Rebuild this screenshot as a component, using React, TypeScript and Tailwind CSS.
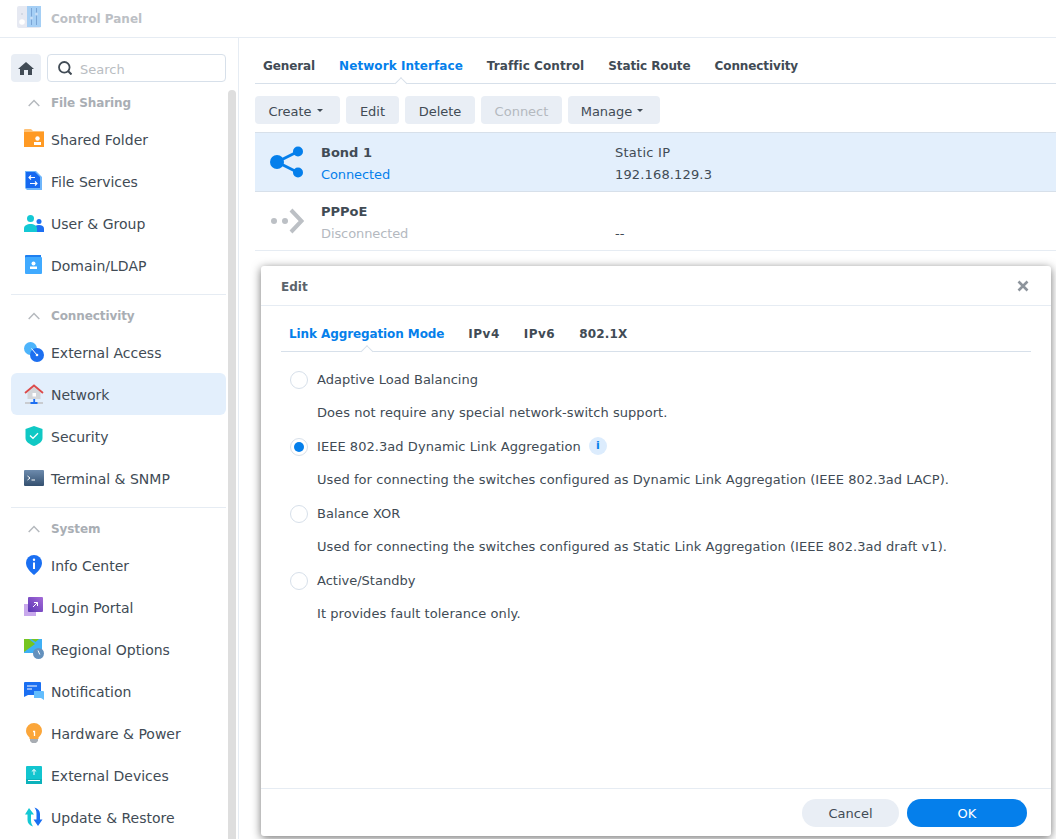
import type { ReactNode } from 'react';

function Ico({ children }: { children: ReactNode }) {
  return (
    <svg viewBox="0 0 20 20" className="w-5 h-5 shrink-0">
      {children}
    </svg>
  );
}

const icons: Record<string, ReactNode> = {
  shared: (
    <Ico>
      <path d="M0 1a1 1 0 0 1 1-1h6l2 2h11v3H0z" fill="#ffc277" />
      <path d="M0 3h20v15H0z" fill="#ff9a24" />
      <circle cx="13.500" cy="9.500" r="2.200" fill="#fff" />
      <rect x="10" y="13" width="7" height="3" fill="#fff" />
    </Ico>
  ),
  files: (
    <Ico>
      <path d="M1 0h11l6 6v13H3l-2-2z" fill="#6fb6fb" />
      <path d="M2 1h9l5 5v11H2z" fill="#1668f0" />
      <path d="M11 6.500H5m2-2-2 2 2 2M6 12.500h7m-2-2 2 2-2 2" stroke="#fff" strokeWidth="1.100" fill="none" />
    </Ico>
  ),
  user: (
    <Ico>
      <circle cx="15" cy="8.500" r="2.500" fill="#1d6ff2" />
      <path d="M10 19v-3.500c0-2 2-3.500 5-3.500s5 1.500 5 3.500V19z" fill="#1d6ff2" />
      <circle cx="6.500" cy="5.500" r="3.500" fill="#14c8d4" />
      <path d="M0 19v-3.500C0 12.500 3 11 6.500 11s6.500 1.500 6.500 4.500V19z" fill="#14c8d4" />
    </Ico>
  ),
  domain: (
    <Ico>
      <path d="M2 0h15v3H1V1a1 1 0 0 1 1-1z" fill="#1f7ff0" />
      <rect x="1" y="2" width="17" height="17" rx="1" fill="#40aaff" />
      <circle cx="9.500" cy="8.500" r="2" fill="#fff" />
      <rect x="6" y="11.500" width="7" height="2.500" fill="#fff" />
    </Ico>
  ),
  external: (
    <Ico>
      <circle cx="6.500" cy="6.500" r="6.500" fill="#4db4fb" />
      <circle cx="13" cy="13" r="7" fill="#1c6ff0" />
      <path d="M7.500 6.500 13 13" stroke="#fff" strokeWidth="1" />
      <circle cx="13" cy="13" r="1.300" fill="#fff" />
    </Ico>
  ),
  network: (
    <Ico>
      <path d="M3.500 8 10 3l6.500 5v7h-13z" fill="#d3d6da" />
      <path d="M1 9 10 1.500 19 9" stroke="#dc4a4a" strokeWidth="1.800" fill="none" />
      <rect x="8.500" y="9" width="3.500" height="3.500" fill="#fff" />
      <rect x="9.300" y="15" width="1.800" height="3" fill="#1d6ff2" />
      <rect x="1" y="18" width="18" height="2" fill="#c9ccd1" />
      <rect x="6.500" y="18" width="7" height="2" fill="#1d6ff2" />
    </Ico>
  ),
  security: (
    <Ico>
      <path d="M10 0l8.500 3v9c0 4-4.500 6.500-8.500 8-4-1.500-8.500-4-8.500-8V3z" fill="#10c8c4" />
      <path d="M6 9.500l3 2.800 5-5" stroke="#fff" strokeWidth="1.300" fill="none" />
    </Ico>
  ),
  terminal: (
    <Ico>
      <defs>
        <linearGradient id="term" x1="0" y1="0" x2="0" y2="1">
          <stop offset="0" stopColor="#6d8bad" />
          <stop offset="1" stopColor="#34506f" />
        </linearGradient>
      </defs>
      <rect x="0" y="2" width="20" height="16" rx="1" fill="url(#term)" />
      <path d="M3.500 8l2.500 2-2.500 2M7.500 12H11" stroke="#fff" strokeWidth="1" fill="none" />
    </Ico>
  ),
  info: (
    <Ico>
      <path d="M10 0a8 8 0 0 1 8 8c0 5-5 9.500-8 12-3-2.500-8-7-8-12a8 8 0 0 1 8-8z" fill="#1a6ff2" />
      <rect x="9" y="7.500" width="2" height="6.500" fill="#fff" />
      <circle cx="10" cy="4.800" r="1.200" fill="#fff" />
    </Ico>
  ),
  login: (
    <Ico>
      <rect x="0" y="7" width="12" height="12" fill="#c8a8ec" />
      <defs>
        <linearGradient id="login" x1="1" y1="0" x2="0" y2="1">
          <stop offset="0" stopColor="#a56bd8" />
          <stop offset="1" stopColor="#5a35b4" />
        </linearGradient>
      </defs>
      <rect x="4" y="0" width="15" height="15" rx="1" fill="url(#login)" />
      <path d="M9 10l4.500-4.500M10 5.500h3.500V9" stroke="#fff" strokeWidth="1" fill="none" />
    </Ico>
  ),
  regional: (
    <Ico>
      <path d="M0 0h18v14H0z" fill="#3fb0f5" />
      <path d="M0 0h5l6 5-11 8z" fill="#76c520" />
      <path d="M7 0h8l-3.500 3z" fill="#76c520" />
      <circle cx="14.500" cy="14.500" r="5.500" fill="#6491bd" />
      <path d="M14 11.500l1.800 4" stroke="#fff" strokeWidth="1" />
    </Ico>
  ),
  notification: (
    <Ico>
      <path d="M0 2a1 1 0 0 1 1-1h15a1 1 0 0 1 1 1v12H4l-4 2z" fill="#1a6ff2" />
      <path d="M3 5h10M3 8h5" stroke="#fff" strokeWidth="1" />
      <path d="M10 10h9a1 1 0 0 1 1 1v8l-3-2h-7z" fill="#63bdfd" />
    </Ico>
  ),
  hardware: (
    <Ico>
      <path d="M10 0a8 8 0 0 1 8 8c0 3-2 5-3.500 6.500V16h-9v-1.500C4 13 2 11 2 8a8 8 0 0 1 8-8z" fill="#fba63a" />
      <path d="M6 16h8v2l-2 2H8l-2-2z" fill="#a8adb3" />
      <path d="M9 8.500h1.500v4.500" stroke="#fff" strokeWidth="1.300" fill="none" />
    </Ico>
  ),
  devices: (
    <Ico>
      <rect x="2" y="1" width="16" height="18" rx="1" fill="#12c5cf" />
      <rect x="2" y="14" width="16" height="5" fill="#0cb2bb" />
      <path d="M10 10V4.500M7.800 6.500 10 4.500l2.200 2" stroke="#fff" strokeWidth="1" fill="none" />
      <rect x="4" y="15" width="12" height="1" fill="#fff" />
    </Ico>
  ),
  update: (
    <Ico>
      <path d="M5 1 1 7.500h2.500V13c0 3 2 5.500 5.500 6.500-1-1.500-2-3-2-6V7.500h3z" fill="#14c8d4" />
      <path d="M14 19l4.500-6.500H16V7c0-3-2-5.500-5.500-6.500 1 1.500 2 3 2 6v6h-3z" fill="#1a6ff2" />
    </Ico>
  ),
};

const groups = [
  {
    title: 'File Sharing',
    items: [
      ['shared', 'Shared Folder'],
      ['files', 'File Services'],
      ['user', 'User & Group'],
      ['domain', 'Domain/LDAP'],
    ],
  },
  {
    title: 'Connectivity',
    items: [
      ['external', 'External Access'],
      ['network', 'Network'],
      ['security', 'Security'],
      ['terminal', 'Terminal & SNMP'],
    ],
  },
  {
    title: 'System',
    items: [
      ['info', 'Info Center'],
      ['login', 'Login Portal'],
      ['regional', 'Regional Options'],
      ['notification', 'Notification'],
      ['hardware', 'Hardware & Power'],
      ['devices', 'External Devices'],
      ['update', 'Update & Restore'],
    ],
  },
];

function Sidebar() {
  return (
    <aside className="relative w-[239px] shrink-0 border-r border-[#e6ecf3] pt-4 overflow-hidden">
      <div className="flex gap-[6px] pl-[11px] h-7">
        <div className="w-[30px] h-7 rounded bg-[#e9eef5] flex items-center justify-center">
          <svg viewBox="0 0 16 13" className="w-4 h-[13px]">
            <path d="M8 0l8 7h-2v6h-4V8H6v5H2V7H0z" fill="#414b55" />
          </svg>
        </div>
        <div className="w-[179px] h-7 rounded border border-[#d7e0ea] flex items-center pl-[10px] gap-[8px]">
          <svg viewBox="0 0 14 14" className="w-[14px] h-[14px]">
            <circle cx="6.300" cy="6.300" r="5.300" stroke="#414b55" strokeWidth="1.800" fill="none" />
            <path d="M10 10l3.500 3.500" stroke="#414b55" strokeWidth="2" />
          </svg>
          <span className="text-[13px] text-[#b9bdc2] pt-1">Search</span>
        </div>
      </div>
      <div className="w-[215px] ml-[11px]">
        {groups.map((g, i) => (
          <div key={g.title}>
            {i > 0 && <div className="h-px bg-[#e6ecf3] mt-2" />}
            <div className="h-9 pt-3 flex items-start text-xs font-bold leading-[18px] tracking-[-0.1px] text-[#a9aeb4]">
              <svg viewBox="0 0 12 8" className="w-3 h-2 ml-[17px] mr-[11px] mt-[5px]">
                <path d="M.7 7 6 1.500 11.300 7" stroke="#b5b9be" strokeWidth="1.500" fill="none" />
              </svg>
              {g.title}
            </div>
            {g.items.map(([icon, label]) => (
              <div
                key={label}
                className={`h-[42px] flex items-center gap-[7px] pl-[13px] rounded-md text-sm text-[#414b55] ${
                  label === 'Network' ? 'bg-[#e3effc]' : ''
                }`}
              >
                {icons[icon]}
                <span className="pt-[2px]">{label}</span>
              </div>
            ))}
          </div>
        ))}
      </div>
      <div className="absolute left-[228px] top-[52px] bottom-0 w-2 rounded-t bg-[#dedede]" />
    </aside>
  );
}

function Tabs({ labels, active }: { labels: [string, string][]; active: number }) {
  return (
    <div className="flex gap-6">
      {labels.map(([t, track], i) => (
        <span key={t} className={`relative font-bold text-xs ${track} ${i === active ? 'text-[#057feb]' : 'text-[#414b55]'}`}>
          {t}
          {i === active && (
            <span className="absolute left-1/2 -translate-x-1/2 -bottom-[14px] w-[9px] h-[9px] rotate-45 bg-white border-l border-t border-[#d7e0ea]" />
          )}
        </span>
      ))}
    </div>
  );
}

function Btn({ label, width, caret, disabled }: { label: string; width: string; caret?: boolean; disabled?: boolean }) {
  return (
    <div
      className={`h-7 rounded bg-[#e9eef5] flex items-center justify-center gap-[5px] text-[13px] ${width} ${
        disabled ? 'text-[#b4b9bf]' : 'text-[#414b55]'
      }`}
    >
      <span className="pt-1">{label}</span>
      {caret && <span className="w-0 h-0 mr-1 border-x-[3.5px] border-x-transparent border-t-[3.5px] border-t-[#414b55]" />}
    </div>
  );
}

function Radio({ checked }: { checked?: boolean }) {
  return (
    <span className="w-[18px] h-[18px] rounded-full border border-[#d7e0ea] bg-white flex items-center justify-center shrink-0">
      {checked && <span className="w-[10px] h-[10px] rounded-full bg-[#057feb]" />}
    </span>
  );
}

const modes = [
  ['Adaptive Load Balancing', 'Does not require any special network-switch support.'],
  ['IEEE 802.3ad Dynamic Link Aggregation', 'Used for connecting the switches configured as Dynamic Link Aggregation (IEEE 802.3ad LACP).'],
  ['Balance XOR', 'Used for connecting the switches configured as Static Link Aggregation (IEEE 802.3ad draft v1).'],
  ['Active/Standby', 'It provides fault tolerance only.'],
];

function EditDialog() {
  return (
    <div className="absolute left-[261px] top-[266px] w-[790px] h-[570px] bg-white rounded-[3px] shadow-[0_2px_10px_rgba(0,0,0,0.55)] flex flex-col">
      <div className="h-10 shrink-0 border-b border-[#e6ecf3] flex items-center justify-between pl-5 pr-[22px] text-xs font-bold text-[#5b636c]">
        <span className="pt-[2px]">Edit</span>
        <svg viewBox="0 0 12 12" className="w-3 h-3">
          <path d="M1.500 1.500l9 9M10.500 1.500l-9 9" stroke="#8d949c" strokeWidth="2.600" />
        </svg>
      </div>
      <div className="flex-1 px-5">
        <div className="h-[46px] pt-5 pl-2 border-b border-[#d7e0ea] leading-[18px]">
          <Tabs
            labels={[
              ['Link Aggregation Mode', 'tracking-[-0.1px]'],
              ['IPv4', 'tracking-[0.5px]'],
              ['IPv6', 'tracking-[0.5px]'],
              ['802.1X', 'tracking-[0.15px]'],
            ]}
            active={0}
          />
        </div>
        <div className="pt-[11px] pl-[9px] text-[13px] text-[#414b55]">
          {modes.map(([label, desc], i) => (
            <div key={label}>
              <div className="h-[33.500px] flex items-center gap-[9px]">
                <Radio checked={i === 1} />
                <span className={i === 1 ? 'tracking-[0.05px]' : ''}>{label}</span>
                {i === 1 && (
                  <span className="w-[18px] h-[18px] rounded-full bg-[#dcecfd] text-[#057feb] text-[11px] font-bold flex items-center justify-center -mt-[2px] -ml-px">
                    i
                  </span>
                )}
              </div>
              <div className="h-[33.500px] flex items-center pl-[27px] pb-[2px] tracking-[0.06px]">{desc}</div>
            </div>
          ))}
        </div>
      </div>
      <div className="h-[48px] shrink-0 border-t border-[#e6ecf3] flex justify-end items-center gap-2 pr-6 text-[13px]">
        <div className="w-[97px] h-7 rounded-full bg-[#e9eef5] text-[#414b55] flex items-center justify-center pt-[2px]">Cancel</div>
        <div className="w-[120px] h-7 rounded-full bg-[#057feb] text-white flex items-center justify-center pt-[2px]">OK</div>
      </div>
    </div>
  );
}

export default function App() {
  return (
    <div className="relative w-[1056px] h-[839px] overflow-hidden bg-white flex flex-col font-['DejaVu_Sans',sans-serif]">
      <header className="h-[38px] shrink-0 border-b border-[#e6ecf3] flex items-center pl-[17px] gap-[10px] text-xs font-bold text-[#bcc0c5]">
        <svg viewBox="0 0 24 24" className="w-6 h-6 shrink-0 -mt-[2px]">
          <rect x="0" y="0" width="24" height="22" rx="2" fill="#e6e9f2" />
          <rect x="10" y="0" width="14" height="21" fill="#a5cff5" />
          <path d="M14.500 2v17M19.500 2v17" stroke="#7aa5d6" strokeWidth="1" />
          <circle cx="5" cy="16" r="2.800" fill="#fff" />
          <circle cx="5" cy="8" r=".8" fill="#bcc4d2" />
          <circle cx="19.500" cy="8" r="1.500" fill="#c9def5" />
          <circle cx="14.500" cy="12" r="1.500" fill="#c9def5" />
        </svg>
        Control Panel
      </header>
      <div className="flex flex-1 min-h-0">
        <Sidebar />
        <main className="flex-1 min-w-0 pl-4">
          <div className="h-[46px] pt-5 pl-2 border-b border-[#d7e0ea] leading-[18px]">
            <Tabs
              labels={[
                ['General', 'tracking-[-0.1px]'],
                ['Network Interface', 'tracking-[0.06px]'],
                ['Traffic Control', 'tracking-[0.07px]'],
                ['Static Route', 'tracking-[-0.1px]'],
                ['Connectivity', 'tracking-[-0.1px]'],
              ]}
              active={1}
            />
          </div>
          <div className="flex gap-[6px] mt-3">
            <Btn label="Create" width="w-[85px]" caret />
            <Btn label="Edit" width="w-[53px]" />
            <Btn label="Delete" width="w-[70px]" />
            <Btn label="Connect" width="w-[81px]" disabled />
            <Btn label="Manage" width="w-[92px]" caret />
          </div>
          <div className="mt-2 border-t border-[#d7e0ea]">
            <div className="h-[59px] bg-[#e3effc] border-b border-[#d7e0ea] flex items-center text-[13px]">
              <svg viewBox="0 0 34 34" className="w-[34px] h-[34px] ml-[15px] shrink-0">
                <path d="M7 17 28 6.500M7 17l21 10.500" stroke="#057feb" strokeWidth="3" />
                <circle cx="7" cy="17" r="7" fill="#057feb" />
                <circle cx="28" cy="6.500" r="5" fill="#057feb" />
                <circle cx="28" cy="27.500" r="5" fill="#057feb" />
              </svg>
              <div className="ml-[17px] w-[294px] pt-1">
                <div className="font-bold leading-[22px] text-[#414b55]">Bond 1</div>
                <div className="leading-[22px] text-[#057feb] tracking-[-0.1px]">Connected</div>
              </div>
              <div className="text-[#414b55] pt-1">
                <div className="leading-[22px] tracking-[0.25px]">Static IP</div>
                <div className="leading-[22px] tracking-[0.15px]">192.168.129.3</div>
              </div>
            </div>
            <div className="h-[59px] border-b border-[#e6ecf3] flex items-center text-[13px]">
              <svg viewBox="0 0 34 34" className="w-[34px] h-[34px] ml-[15px] shrink-0">
                <circle cx="4" cy="17" r="3" fill="#bcc0c5" />
                <circle cx="15" cy="17" r="3" fill="#bcc0c5" />
                <path d="M21 6l10.500 11L21 28" stroke="#bcc0c5" strokeWidth="4" fill="none" />
              </svg>
              <div className="ml-[17px] w-[294px] pt-1">
                <div className="font-bold leading-[22px] text-[#414b55]">PPPoE</div>
                <div className="leading-[22px] text-[#b4b9bf] tracking-[-0.1px]">Disconnected</div>
              </div>
              <div className="text-[#414b55] pt-1">
                <div className="leading-[22px]">&nbsp;</div>
                <div className="leading-[22px]">--</div>
              </div>
            </div>
          </div>
        </main>
      </div>
      <EditDialog />
    </div>
  );
}
